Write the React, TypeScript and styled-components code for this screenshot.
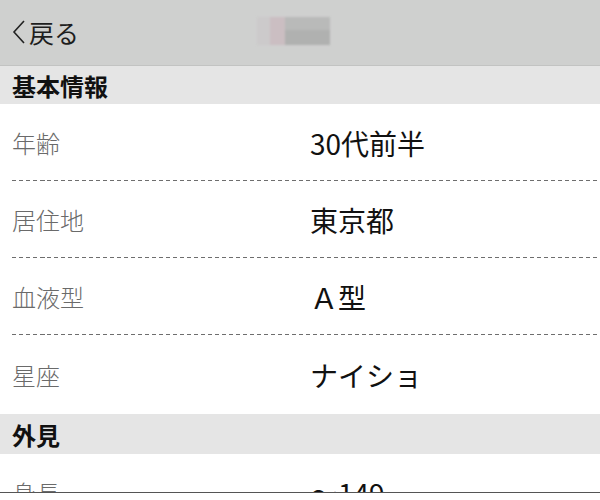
import React from "react";
import styled, { createGlobalStyle } from "styled-components";

const Global = createGlobalStyle`
  html, body { margin: 0; padding: 0; background: #ffffff; }
  body { font-family: "Noto Sans CJK JP", "Noto Sans", sans-serif; overflow: hidden; }
`;

const Page = styled.div`
  width: 600px;
  height: 500px;
  display: flex;
  flex-direction: column;
  overflow: hidden;
  position: relative;
  background: #fff;
`;

const Header = styled.header`
  flex: 0 0 66px;
  height: 66px;
  background: #cfd0cf;
  border-bottom: 1px solid #c2c3c2;
  display: flex;
  align-items: center;
  padding: 0 12px;
  box-sizing: border-box;
  position: relative;
`;

const Back = styled.div`
  display: flex;
  align-items: center;
  gap: 3px;
  font-size: 25px;
  color: #1e1e1e;
  margin-top: -2px;
`;

const Blur = styled.div`
  position: absolute;
  left: 257px;
  top: 17px;
  width: 73px;
  height: 28px;
  display: flex;
  filter: blur(1.2px);
`;

const BlurBlock = styled.div<{ $w: number; $c: string; $c2?: string }>`
  width: ${(p) => p.$w}px;
  height: 100%;
  background: ${(p) =>
    p.$c2 ? `linear-gradient(${p.$c} 0 45%, ${p.$c2} 45% 100%)` : p.$c};
`;

const SectionTitle = styled.div<{ $h: number }>`
  flex: 0 0 auto;
  height: ${(p) => p.$h}px;
  background: #e5e5e5;
  display: flex;
  align-items: center;
  padding: 0 12px;
  font-size: 24px;
  font-weight: 700;
  color: #111;
`;

const Row = styled.div<{ $last?: boolean }>`
  flex: 0 0 auto;
  height: ${(p) => (p.$last ? 79 : 77)}px;
  display: flex;
  align-items: center;
  padding: 0 12px;
  position: relative;
  background: #fff;
  ${(p) =>
    p.$last
      ? ""
      : `&::after {
    content: "";
    position: absolute;
    left: 12px;
    right: 0;
    bottom: 0;
    height: 1.5px;
    background: repeating-linear-gradient(to right, #6e6e6e 0 4.5px, transparent 4.5px 7px);
  }`}
`;

const Label = styled.div`
  width: 298px;
  font-size: 24px;
  font-weight: 300;
  color: #6a6a6a;
`;

const Value = styled.div`
  font-size: 28px;
  color: #111;
`;

const BottomLine = styled.div`
  position: absolute;
  left: 0;
  right: 0;
  top: 492px;
  bottom: 0;
  background: #ffffff;
  border-top: 1.5px solid #555;
`;

const basic = [
  ["年齢", "30代前半"],
  ["居住地", "東京都"],
  ["血液型", "Ａ型"],
  ["星座", "ナイショ"],
];

export default function App() {
  return (
    <>
      <Global />
      <Page>
        <Header>
          <Back>
            <svg width="14" height="26" viewBox="0 0 14 26" aria-hidden="true">
              <path d="M12 2 L2 13 L12 24" fill="none" stroke="#222" strokeWidth="1.6" />
            </svg>
            <span>戻る</span>
          </Back>
          <Blur>
            <BlurBlock $w={13} $c="#cccacb" />
            <BlurBlock $w={15} $c="#cbbec2" />
            <BlurBlock $w={45} $c="#b9bab9" $c2="#b0b1b0" />
          </Blur>
        </Header>
        <SectionTitle $h={38}>基本情報</SectionTitle>
        {basic.map(([l, v], i) => (
          <Row key={l} $last={i === basic.length - 1}>
            <Label>{l}</Label>
            <Value>{v}</Value>
          </Row>
        ))}
        <SectionTitle $h={40}>外見</SectionTitle>
        <Row>
          <Label>身長</Label>
          <Value>〜149</Value>
        </Row>
        <BottomLine />
      </Page>
    </>
  );
}
